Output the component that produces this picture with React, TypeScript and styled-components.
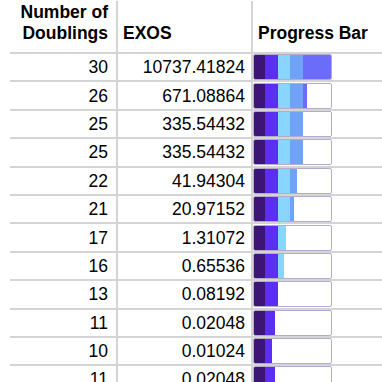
import React from "react";
import styled, { createGlobalStyle } from "styled-components";

const GlobalStyle = createGlobalStyle`
  html, body {
    margin: 0;
    padding: 0;
    overflow: hidden;
    background: #ffffff;
  }
  body {
    font-family: "Liberation Sans", Arial, sans-serif;
    color: #000;
  }
`;

const Table = styled.table`
  width: 430px;
  margin: 1px 0 0 10px;
  border-collapse: collapse;
  table-layout: fixed;
`;

const HeadCell = styled.th<{ $align?: "left" | "right"; $divider?: boolean }>`
  padding: 1px ${(p) => (p.$align === "right" ? "8px" : "0")} 8px
    ${(p) => (p.$align === "right" ? "0" : "5px")};
  font-size: 17.5px;
  font-weight: bold;
  line-height: 21px;
  text-align: ${(p) => p.$align || "left"};
  vertical-align: bottom;
  border-bottom: 2px solid #d4d4d4;
  border-right: ${(p) => (p.$divider ? "2px solid #d4d4d4" : "none")};
`;

const Cell = styled.td<{ $pad?: number; $divider?: boolean }>`
  height: 26.4px;
  padding: 0 ${(p) => p.$pad ?? 0}px 0 0;
  font-size: 17.5px;
  line-height: 26px;
  text-align: right;
  vertical-align: middle;
  border-bottom: 2px solid #d4d4d4;
  border-right: ${(p) => (p.$divider ? "2px solid #d4d4d4" : "none")};
`;

const BarCell = styled.td`
  height: 26.4px;
  padding: 0;
  vertical-align: middle;
  border-bottom: 2px solid #d4d4d4;
`;

const Bar = styled.div`
  box-sizing: border-box;
  width: 79px;
  height: 26px;
  border: 1px solid #b4accb;
  border-radius: 2px;
  background: #ffffff;
  overflow: hidden;
`;

const Fill = styled.div`
  height: 100%;
  background-image: linear-gradient(
    to right,
    #3c1577 0 11px,
    #5b2ef2 11px 24px,
    #8ad5fd 24px 36px,
    #72a2f8 36px 49px,
    #6b6cf9 49px 77px
  );
  background-size: 77px 100%;
  background-repeat: no-repeat;
`;

interface IRow {
  doublings: number;
  exos: string;
  fill: number;
}

const rows: IRow[] = [
  { doublings: 30, exos: "10737.41824", fill: 100 },
  { doublings: 26, exos: "671.08864", fill: 69 },
  { doublings: 25, exos: "335.54432", fill: 64 },
  { doublings: 25, exos: "335.54432", fill: 64 },
  { doublings: 22, exos: "41.94304", fill: 56 },
  { doublings: 21, exos: "20.97152", fill: 52 },
  { doublings: 17, exos: "1.31072", fill: 42 },
  { doublings: 16, exos: "0.65536", fill: 39 },
  { doublings: 13, exos: "0.08192", fill: 31 },
  { doublings: 11, exos: "0.02048", fill: 27 },
  { doublings: 10, exos: "0.01024", fill: 23 },
  { doublings: 11, exos: "0.02048", fill: 27 },
];

const App = () => {
  return (
    <>
      <GlobalStyle />
      <Table>
        <colgroup>
          <col style={{ width: 107 }} />
          <col style={{ width: 135 }} />
          <col />
        </colgroup>
        <thead>
          <tr>
            <HeadCell $align="right" $divider>
              Number of
              <br />
              Doublings
            </HeadCell>
            <HeadCell $divider>EXOS</HeadCell>
            <HeadCell>Progress Bar</HeadCell>
          </tr>
        </thead>
        <tbody>
          {rows.map((row, i) => (
            <tr key={i}>
              <Cell $pad={8} $divider>
                {row.doublings}
              </Cell>
              <Cell $pad={6} $divider>
                {row.exos}
              </Cell>
              <BarCell>
                <Bar>
                  <Fill style={{ width: `${row.fill}%` }} />
                </Bar>
              </BarCell>
            </tr>
          ))}
        </tbody>
      </Table>
    </>
  );
};

export default App;
